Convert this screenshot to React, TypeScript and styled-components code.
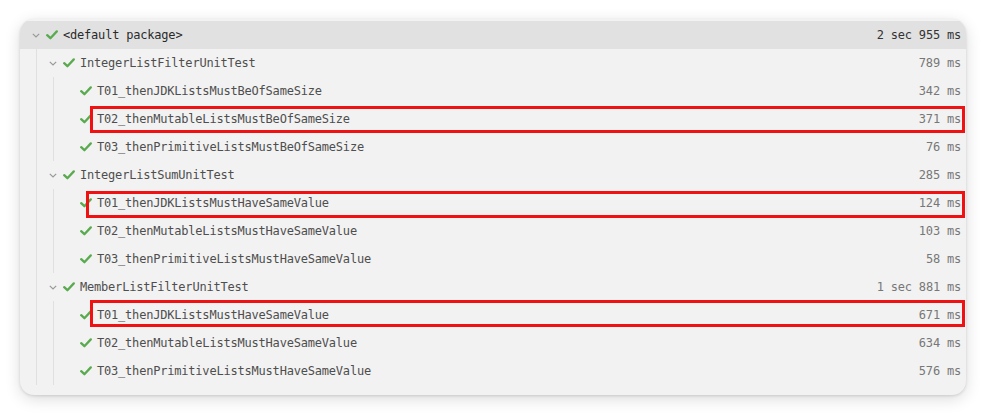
import React from 'react';
import styled, { createGlobalStyle } from 'styled-components';

const GlobalStyle = createGlobalStyle`
  html, body {
    margin: 0;
    padding: 0;
    background: #ffffff;
  }
`;

const Page = styled.div`
  padding: 19px 19px 20px 20px;
  width: 985px;
  height: 415px;
  box-sizing: border-box;
`;

const Card = styled.div`
  width: 946px;
  height: 376px;
  box-sizing: border-box;
  padding-top: 2px;
  background: #f2f2f2;
  border-radius: 14px;
  box-shadow: 0 1px 3px rgba(0, 0, 0, 0.12), 0 4px 16px rgba(0, 0, 0, 0.14);
  overflow: hidden;
  font-family: 'DejaVu Sans Mono', 'Liberation Mono', monospace;
  font-size: 12px;
  letter-spacing: -0.2px;
`;

const Row = styled.div<{ $level: number; $selected?: boolean }>`
  position: relative;
  display: flex;
  align-items: center;
  height: 28px;
  padding-left: ${(p) => 8 + p.$level * 17}px;
  padding-right: 5px;
  background: ${(p) => (p.$selected ? '#e1e1e1' : 'transparent')};
  color: ${(p) => (p.$selected ? '#2a2a2a' : '#4e4e4e')};
`;

const Slot = styled.span`
  display: flex;
  align-items: center;
  justify-content: center;
  width: 16px;
  height: 16px;
  flex-shrink: 0;
`;

const Name = styled.span`
  margin-left: 3px;
  flex: 1;
  white-space: nowrap;
`;

const Duration = styled.span<{ $strong?: boolean }>`
  color: ${(p) => (p.$strong ? '#333333' : '#777777')};
  white-space: nowrap;
`;

const Children = styled.div<{ $guide: number }>`
  position: relative;

  &::before {
    content: '';
    position: absolute;
    left: ${(p) => p.$guide}px;
    top: 0;
    bottom: 0;
    width: 1px;
    background: #e0e0e0;
  }
`;

// red annotation box drawn over a row
const Mark = styled.div<{ $left: number; $top: number }>`
  position: absolute;
  left: ${(p) => p.$left}px;
  right: 1px;
  top: ${(p) => p.$top}px;
  height: 27px;
  box-sizing: border-box;
  border: 3px solid #f01212;
  pointer-events: none;
`;

const Chevron = () => (
  <svg width="8" height="5" viewBox="0 0 8 5">
    <path d="M0.8 0.8 L4 4 L7.2 0.8" fill="none" stroke="#9a9a9a" strokeWidth="1.2" />
  </svg>
);

const Check = () => (
  <svg width="12" height="10" viewBox="0 0 12 10">
    <path d="M1.2 5.2 L4.4 8.2 L10.8 1.4" fill="none" stroke="#5aab4f" strokeWidth="2.3" strokeLinecap="round" strokeLinejoin="round" />
  </svg>
);

type Node = {
  name: string;
  time: string;
  mark?: { left: number; top: number };
  children?: Node[];
};

const tree: Node = {
  name: '<default package>',
  time: '2 sec 955 ms',
  children: [
    {
      name: 'IntegerListFilterUnitTest',
      time: '789 ms',
      children: [
        { name: 'T01_thenJDKListsMustBeOfSameSize', time: '342 ms' },
        { name: 'T02_thenMutableListsMustBeOfSameSize', time: '371 ms', mark: { left: 70, top: 1 } },
        { name: 'T03_thenPrimitiveListsMustBeOfSameSize', time: '76 ms' },
      ],
    },
    {
      name: 'IntegerListSumUnitTest',
      time: '285 ms',
      children: [
        { name: 'T01_thenJDKListsMustHaveSameValue', time: '124 ms', mark: { left: 66, top: 2 } },
        { name: 'T02_thenMutableListsMustHaveSameValue', time: '103 ms' },
        { name: 'T03_thenPrimitiveListsMustHaveSameValue', time: '58 ms' },
      ],
    },
    {
      name: 'MemberListFilterUnitTest',
      time: '1 sec 881 ms',
      children: [
        { name: 'T01_thenJDKListsMustHaveSameValue', time: '671 ms', mark: { left: 70, top: -1 } },
        { name: 'T02_thenMutableListsMustHaveSameValue', time: '634 ms' },
        { name: 'T03_thenPrimitiveListsMustHaveSameValue', time: '576 ms' },
      ],
    },
  ],
};

function TreeNode({ node, level }: { node: Node; level: number }) {
  const hasKids = !!node.children?.length;
  const top = level === 0;
  return (
    <>
      <Row $level={level} $selected={top}>
        <Slot>{hasKids && <Chevron />}</Slot>
        <Slot>
          <Check />
        </Slot>
        <Name>{node.name}</Name>
        <Duration $strong={top}>{node.time}</Duration>
        {node.mark && <Mark $left={node.mark.left} $top={node.mark.top} />}
      </Row>
      {hasKids && (
        <Children $guide={16 + level * 17}>
          {node.children!.map((c, i) => (
            <TreeNode key={i} node={c} level={level + 1} />
          ))}
        </Children>
      )}
    </>
  );
}

export default function App() {
  return (
    <>
      <GlobalStyle />
      <Page>
        <Card>
          <TreeNode node={tree} level={0} />
        </Card>
      </Page>
    </>
  );
}
